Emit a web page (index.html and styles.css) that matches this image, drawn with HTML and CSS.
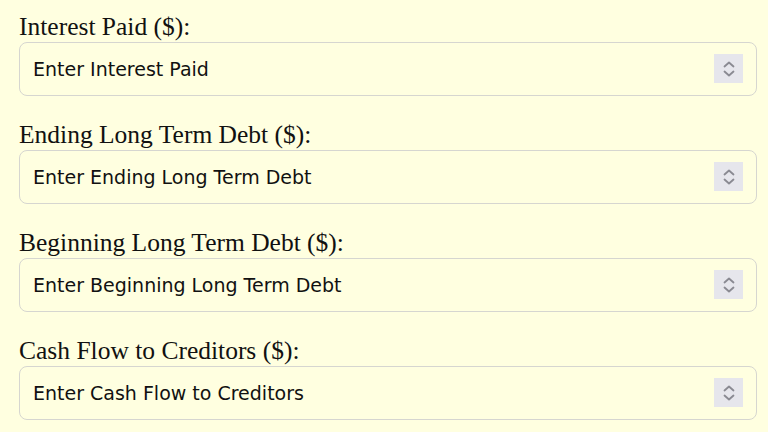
FILE: index.html
```html
<!DOCTYPE html>
<html lang="en">
<head>
<meta charset="utf-8">
<title>Cash Flow to Creditors</title>
<link rel="stylesheet" href="styles.css">
</head>
<body>
<form class="form">
  <div class="field">
    <label class="label" for="interest">Interest Paid ($):</label>
    <div class="input-wrap">
      <input class="input" id="interest" type="text" placeholder="Enter Interest Paid">
      <span class="spin"><svg width="14" height="18" viewBox="0 0 14 18"><path d="M2.5 6.5 L7 2.5 L11.5 6.5 M2.5 11.5 L7 15.5 L11.5 11.5" fill="none" stroke="#8a8a92" stroke-width="1.8" stroke-linecap="round" stroke-linejoin="round"/></svg></span>
    </div>
  </div>
  <div class="field">
    <label class="label" for="ending">Ending Long Term Debt ($):</label>
    <div class="input-wrap">
      <input class="input" id="ending" type="text" placeholder="Enter Ending Long Term Debt">
      <span class="spin"><svg width="14" height="18" viewBox="0 0 14 18"><path d="M2.5 6.5 L7 2.5 L11.5 6.5 M2.5 11.5 L7 15.5 L11.5 11.5" fill="none" stroke="#8a8a92" stroke-width="1.8" stroke-linecap="round" stroke-linejoin="round"/></svg></span>
    </div>
  </div>
  <div class="field">
    <label class="label" for="beginning">Beginning Long Term Debt ($):</label>
    <div class="input-wrap">
      <input class="input" id="beginning" type="text" placeholder="Enter Beginning Long Term Debt">
      <span class="spin"><svg width="14" height="18" viewBox="0 0 14 18"><path d="M2.5 6.5 L7 2.5 L11.5 6.5 M2.5 11.5 L7 15.5 L11.5 11.5" fill="none" stroke="#8a8a92" stroke-width="1.8" stroke-linecap="round" stroke-linejoin="round"/></svg></span>
    </div>
  </div>
  <div class="field">
    <label class="label" for="cfc">Cash Flow to Creditors ($):</label>
    <div class="input-wrap">
      <input class="input" id="cfc" type="text" placeholder="Enter Cash Flow to Creditors">
      <span class="spin"><svg width="14" height="18" viewBox="0 0 14 18"><path d="M2.5 6.5 L7 2.5 L11.5 6.5 M2.5 11.5 L7 15.5 L11.5 11.5" fill="none" stroke="#8a8a92" stroke-width="1.8" stroke-linecap="round" stroke-linejoin="round"/></svg></span>
    </div>
  </div>
</form>
</body>
</html>
```
FILE: styles.css
```css
html, body {
  margin: 0;
  padding: 0;
  background: #ffffe0;
}
body {
  padding: 12px 11px 0 19px;
}
.form {
  display: flex;
  flex-direction: column;
  gap: 24px;
}
.field {
  display: flex;
  flex-direction: column;
}
.label {
  font-family: "Liberation Serif", "Times New Roman", serif;
  font-size: 25.5px;
  line-height: 30px;
  color: #111;
}
.input-wrap {
  position: relative;
}
.input {
  box-sizing: border-box;
  width: 100%;
  height: 54px;
  margin: 0;
  padding: 0 60px 0 13px;
  border: 1.5px solid #d6d6d0;
  border-radius: 8px;
  background: #ffffe0;
  font-family: "DejaVu Sans", Tahoma, sans-serif;
  font-size: 19px;
  color: #111;
  outline: none;
}
.input::placeholder {
  color: #111;
  opacity: 1;
}
.spin {
  position: absolute;
  right: 14px;
  top: 12px;
  width: 29px;
  height: 29px;
  background: #e6e6ec;
  display: flex;
  align-items: center;
  justify-content: center;
}
```
